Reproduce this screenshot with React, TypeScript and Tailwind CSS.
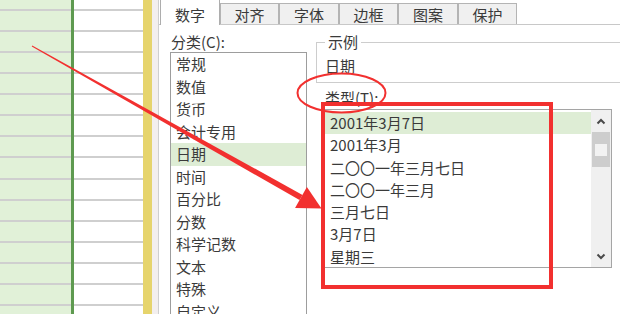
import React from "react";

const categories = [
  "常规",
  "数值",
  "货币",
  "会计专用",
  "日期",
  "时间",
  "百分比",
  "分数",
  "科学记数",
  "文本",
  "特殊",
  "自定义",
];

const types = [
  "2001年3月7日",
  "2001年3月",
  "二〇〇一年三月七日",
  "二〇〇一年三月",
  "三月七日",
  "3月7日",
  "星期三",
];

const tabs = [
  { label: "数字", w: "w-[60px]" },
  { label: "对齐", w: "w-[59px]" },
  { label: "字体", w: "w-[60px]" },
  { label: "边框", w: "w-[59px]" },
  { label: "图案", w: "w-[60px]" },
  { label: "保护", w: "w-[59px]" },
];

function SheetRows() {
  return (
    <>
      {Array.from({ length: 15 }).map((_, i) => (
        <div key={i} className="h-[21.07px] border-t-2 border-[#cfcfcf]" />
      ))}
    </>
  );
}

function Chevron({ down }: { down?: boolean }) {
  return (
    <svg width="10" height="7" viewBox="0 0 10 7">
      <path
        d={down ? "M1.5 1.5 L5 5 L8.5 1.5" : "M1.5 5.5 L5 2 L8.5 5.5"}
        fill="none"
        stroke="#4a4a4a"
        strokeWidth="2"
      />
    </svg>
  );
}

// 红色标注：箭头、椭圆、方框
function Annotations() {
  return (
    <svg
      className="absolute inset-0 pointer-events-none"
      width="620"
      height="314"
      viewBox="0 0 620 314"
    >
      <rect x="323" y="104" width="228" height="183" fill="none" stroke="#f2302f" strokeWidth="4" />
      <ellipse cx="341.5" cy="93" rx="44" ry="19.5" fill="none" stroke="#f2302f" strokeWidth="2" />
      <polygon
        points="32.25,45.56 302.5,194.9 299.5,200.1 31.75,46.44"
        fill="#f2302f"
      />
      <polygon points="321.5,208.5 295.1,207.9 306.9,187" fill="#f2302f" />
    </svg>
  );
}

export default function App() {
  return (
    <div className="relative w-[620px] h-[314px] overflow-hidden flex bg-white font-['Noto_Sans_CJK_SC','Noto_Sans',sans-serif] text-[15px] text-[#3a3a3a]">
      {/* 表格背景 */}
      <div className="flex h-full shrink-0">
        <div className="w-[71px] bg-[#e1f1d8] pt-[9px]">
          <SheetRows />
        </div>
        <div className="w-[3px] bg-[#5e9a50]" />
        <div className="w-[69px] bg-white pt-[9px]">
          <SheetRows />
        </div>
        <div className="w-[9px] bg-[#e6d46c]" />
        <div className="w-[6px] bg-[#f3efee]" />
      </div>

      {/* 设置单元格格式 对话框 */}
      <div className="flex-1 min-w-0 flex flex-col border-l border-[#cfcfcf] bg-white overflow-hidden">
        <div className="flex items-end h-[24px] pl-[1px] shrink-0">
          {tabs.map((t, i) =>
            i === 0 ? (
              <div
                key={t.label}
                className={`${t.w} relative z-10 h-[25px] -mb-[1px] bg-white border-x border-[#adadad] flex items-center justify-center pt-[4px] leading-[18px]`}
              >
                {t.label}
              </div>
            ) : (
              <div
                key={t.label}
                className={`${t.w} h-[21px] bg-[#f0f0f0] border border-b-0 border-[#b4b4b4] flex items-center justify-center pt-[2px] leading-[18px]`}
              >
                {t.label}
              </div>
            )
          )}
        </div>

        <div className="flex-1 flex border-t border-[#c8c8c8] pl-[11px]">
          {/* 分类 */}
          <div className="w-[137px] shrink-0 flex flex-col">
            <div className="pt-[8px] h-[27px] leading-[18px] pl-[1px]">分类(C):</div>
            <div className="flex-1 border border-b-0 border-[#9d9d9d]">
              {categories.map((c) => (
                <div
                  key={c}
                  className={`h-[22.5px] leading-[22.5px] pl-[5px] ${c === "日期" ? "bg-[#deedd5]" : ""}`}
                >
                  {c}
                </div>
              ))}
            </div>
          </div>

          {/* 右侧 */}
          <div className="ml-[9px] w-[320px] shrink-0 flex flex-col">
            <fieldset className="mt-[9px] border border-[#cdcdcd] pl-[8px] pb-[7px]">
              <legend className="px-[3px] leading-[16px]">示例</legend>
              <div className="mt-[7px] leading-[18px]">日期</div>
            </fieldset>

            <div className="pl-[7px]">
              <div className="mt-[6px] leading-[18px] pl-[2px]">类型(T):</div>
              <div className="mt-[2px] w-[289px] h-[159px] border border-[#a5a5a5] flex">
                <div className="flex-1 pt-[2px]">
                  {types.map((t, i) => (
                    <div
                      key={t}
                      className={`h-[22.3px] leading-[22.3px] pl-[6px] ${i === 0 ? "bg-[#deedd5]" : ""}`}
                    >
                      {t}
                    </div>
                  ))}
                </div>
                <div className="w-[20px] bg-[#f0f0f0] flex flex-col">
                  <div className="h-[22px] flex items-center justify-center">
                    <Chevron />
                  </div>
                  <div className="h-[35px] mx-[1px] bg-[#cdcdcd] flex items-center justify-center">
                    <div className="w-[12px] h-[12px] bg-[#f2f2f2]" />
                  </div>
                  <div className="flex-1" />
                  <div className="h-[22px] flex items-center justify-center">
                    <Chevron down />
                  </div>
                </div>
              </div>
            </div>
          </div>
        </div>
      </div>

      <Annotations />
    </div>
  );
}
